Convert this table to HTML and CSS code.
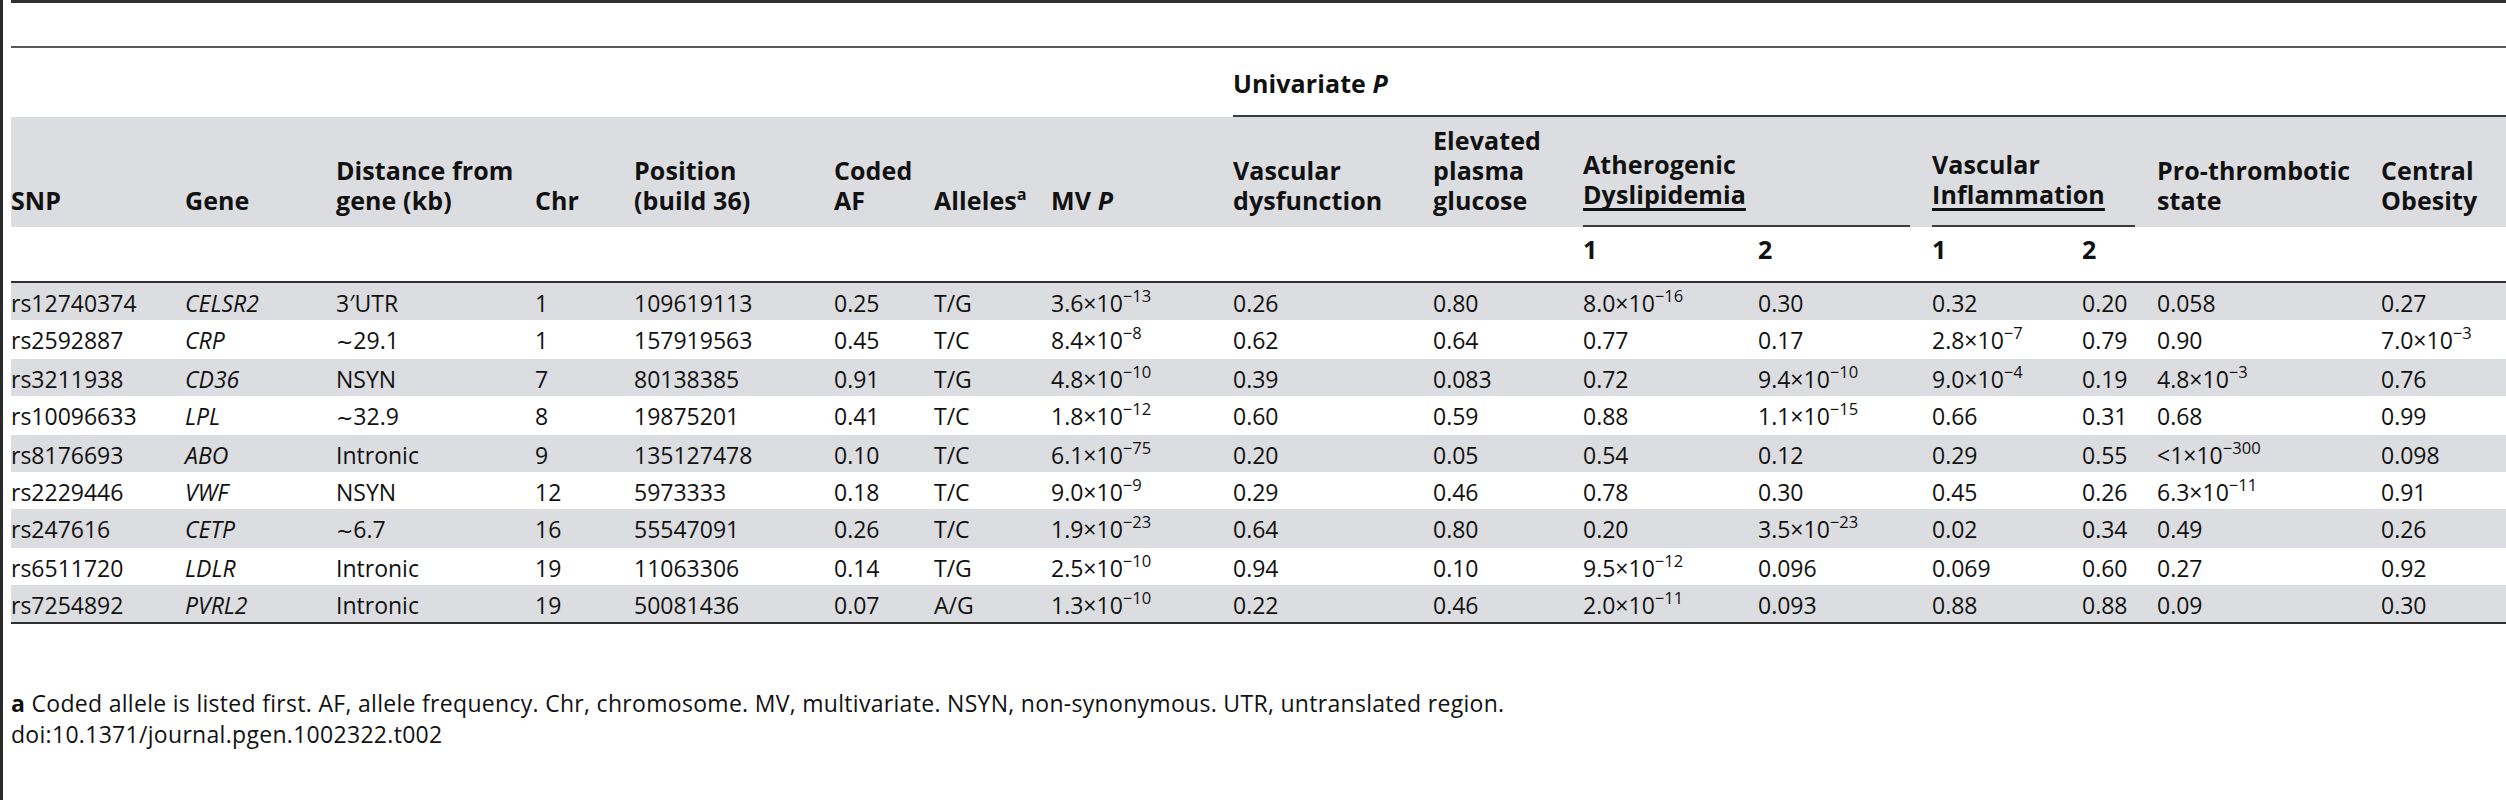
FILE: index.html
```html
<!DOCTYPE html>
<html lang="en">
<head>
<meta charset="utf-8">
<title>Table 2</title>
<link rel="stylesheet" href="styles.css">
</head>
<body>
<div class="page">
  <div class="frame">
    <table class="t">
      <colgroup>
        <col class="w1"><col class="w2"><col class="w3"><col class="w4">
        <col class="w5"><col class="w6"><col class="w7"><col class="w8">
        <col class="w9"><col class="w10"><col class="w11"><col class="w12">
        <col class="w13"><col class="w14"><col class="w15"><col class="w16">
      </colgroup>
      <thead>
        <tr class="uni">
          <td colspan="8"></td>
          <th colspan="8" class="uni-h">Univariate <i>P</i></th>
        </tr>
        <tr class="head">
          <th>SNP</th>
          <th>Gene</th>
          <th>Distance from<br>gene (kb)</th>
          <th>Chr</th>
          <th>Position<br>(build 36)</th>
          <th>Coded<br>AF</th>
          <th>Alleles<sup>a</sup></th>
          <th>MV <i>P</i></th>
          <th>Vascular<br>dysfunction</th>
          <th>Elevated<br>plasma<br>glucose</th>
          <th colspan="2" class="grp"><div class="grp-in">Atherogenic<br><span class="ul">Dyslipidemia</span></div></th>
          <th colspan="2" class="grp"><div class="grp-in">Vascular<br><span class="ul">Inflammation</span></div></th>
          <th>Pro-thrombotic<br>state</th>
          <th>Central<br>Obesity</th>
        </tr>
        <tr class="sub">
          <th></th><th></th><th></th><th></th><th></th><th></th><th></th><th></th><th></th><th></th>
          <th>1</th><th>2</th><th>1</th><th>2</th>
          <th></th><th></th>
        </tr>
      </thead>
      <tbody>
        <tr><td>rs12740374</td><td><i>CELSR2</i></td><td>3′UTR</td><td>1</td><td>109619113</td><td>0.25</td><td>T/G</td><td>3.6×10<sup>−13</sup></td><td>0.26</td><td>0.80</td><td>8.0×10<sup>−16</sup></td><td>0.30</td><td>0.32</td><td>0.20</td><td>0.058</td><td>0.27</td></tr>
        <tr><td>rs2592887</td><td><i>CRP</i></td><td><span class="tl">∼</span>29.1</td><td>1</td><td>157919563</td><td>0.45</td><td>T/C</td><td>8.4×10<sup>−8</sup></td><td>0.62</td><td>0.64</td><td>0.77</td><td>0.17</td><td>2.8×10<sup>−7</sup></td><td>0.79</td><td>0.90</td><td>7.0×10<sup>−3</sup></td></tr>
        <tr><td>rs3211938</td><td><i>CD36</i></td><td>NSYN</td><td>7</td><td>80138385</td><td>0.91</td><td>T/G</td><td>4.8×10<sup>−10</sup></td><td>0.39</td><td>0.083</td><td>0.72</td><td>9.4×10<sup>−10</sup></td><td>9.0×10<sup>−4</sup></td><td>0.19</td><td>4.8×10<sup>−3</sup></td><td>0.76</td></tr>
        <tr><td>rs10096633</td><td><i>LPL</i></td><td><span class="tl">∼</span>32.9</td><td>8</td><td>19875201</td><td>0.41</td><td>T/C</td><td>1.8×10<sup>−12</sup></td><td>0.60</td><td>0.59</td><td>0.88</td><td>1.1×10<sup>−15</sup></td><td>0.66</td><td>0.31</td><td>0.68</td><td>0.99</td></tr>
        <tr><td>rs8176693</td><td><i>ABO</i></td><td>Intronic</td><td>9</td><td>135127478</td><td>0.10</td><td>T/C</td><td>6.1×10<sup>−75</sup></td><td>0.20</td><td>0.05</td><td>0.54</td><td>0.12</td><td>0.29</td><td>0.55</td><td>&lt;1×10<sup>−300</sup></td><td>0.098</td></tr>
        <tr><td>rs2229446</td><td><i>VWF</i></td><td>NSYN</td><td>12</td><td>5973333</td><td>0.18</td><td>T/C</td><td>9.0×10<sup>−9</sup></td><td>0.29</td><td>0.46</td><td>0.78</td><td>0.30</td><td>0.45</td><td>0.26</td><td>6.3×10<sup>−11</sup></td><td>0.91</td></tr>
        <tr><td>rs247616</td><td><i>CETP</i></td><td><span class="tl">∼</span>6.7</td><td>16</td><td>55547091</td><td>0.26</td><td>T/C</td><td>1.9×10<sup>−23</sup></td><td>0.64</td><td>0.80</td><td>0.20</td><td>3.5×10<sup>−23</sup></td><td>0.02</td><td>0.34</td><td>0.49</td><td>0.26</td></tr>
        <tr><td>rs6511720</td><td><i>LDLR</i></td><td>Intronic</td><td>19</td><td>11063306</td><td>0.14</td><td>T/G</td><td>2.5×10<sup>−10</sup></td><td>0.94</td><td>0.10</td><td>9.5×10<sup>−12</sup></td><td>0.096</td><td>0.069</td><td>0.60</td><td>0.27</td><td>0.92</td></tr>
        <tr><td>rs7254892</td><td><i>PVRL2</i></td><td>Intronic</td><td>19</td><td>50081436</td><td>0.07</td><td>A/G</td><td>1.3×10<sup>−10</sup></td><td>0.22</td><td>0.46</td><td>2.0×10<sup>−11</sup></td><td>0.093</td><td>0.88</td><td>0.88</td><td>0.09</td><td>0.30</td></tr>
      </tbody>
    </table>
    <div class="fn">
      <p><b>a</b> Coded allele is listed first. AF, allele frequency. Chr, chromosome. MV, multivariate. NSYN, non-synonymous. UTR, untranslated region.</p>
      <p>doi:10.1371/journal.pgen.1002322.t002</p>
    </div>
  </div>
</div>
</body>
</html>
```

FILE: styles.css
```css
* { box-sizing: border-box; }

html, body {
  margin: 0;
  padding: 0;
  background: #ffffff;
}

body {
  font-family: "Open Sans", "Noto Sans", "DejaVu Sans", sans-serif;
  color: #111111;
}

.page {
  height: 800px;
  overflow: hidden;
  border-left: 3px solid #2b2b2b;
  padding-left: 8px;
}

.frame {
  border-top: 3px solid #303030;
  padding-top: 43px;
}

.t {
  width: 2495px;
  table-layout: fixed;
  border-collapse: separate;
  border-spacing: 0;
  border-top: 2px solid #585858;
  font-size: 23px;
  line-height: 30px;
}

.w1 { width: 174px; }
.w2 { width: 151px; }
.w3 { width: 199px; }
.w4 { width: 99px; }
.w5 { width: 200px; }
.w6 { width: 100px; }
.w7 { width: 117px; }
.w8 { width: 182px; }
.w9 { width: 200px; }
.w10 { width: 150px; }
.w11 { width: 175px; }
.w12 { width: 174px; }
.w13 { width: 150px; }
.w14 { width: 75px; }
.w15 { width: 224px; }
.w16 { width: 125px; }

.t th,
.t td {
  padding: 0 22px 0 0;
  text-align: left;
  vertical-align: bottom;
  white-space: nowrap;
  font-weight: 400;
}

.t th {
  font-weight: 700;
  font-size: 25px;
  letter-spacing: 0.1px;
}

.t .uni td,
.t .uni th {
  padding-top: 20px;
  padding-bottom: 17px;
}

.t .uni .uni-h {
  padding-right: 0;
  border-bottom: 2px solid #3c3c3c;
}

.t .head th {
  background: #dcdde0;
  padding-top: 8px;
  padding-bottom: 12px;
}

.t .head .grp {
  padding-bottom: 0;
}

.grp-in {
  border-bottom: 2px solid #3c3c3c;
  padding-bottom: 16px;
}

.ul {
  text-decoration: underline;
  text-decoration-thickness: 3px;
  text-underline-offset: 4px;
  text-decoration-skip-ink: none;
}

.t .sub th {
  padding-top: 7px;
  padding-bottom: 17px;
  border-bottom: 2px solid #303030;
  vertical-align: top;
}

.t tbody td {
  padding-top: 5px;
  padding-bottom: 2px;
  vertical-align: top;
}

.t tbody tr:nth-child(odd) td {
  background: #dcdde0;
}

.t tbody tr:last-child td {
  border-bottom: 2px solid #303030;
}

sup {
  font-size: 0.72em;
  line-height: 0;
  vertical-align: 0.6em;
  letter-spacing: 0;
}

.t th sup {
  font-size: 0.65em;
}

.tl {
  font-family: "DejaVu Sans", sans-serif;
  font-size: 0.9em;
}

.fn {
  margin-top: 64px;
  font-size: 23px;
  line-height: 31px;
  letter-spacing: 0.3px;
}

.fn p {
  margin: 0;
}
```
